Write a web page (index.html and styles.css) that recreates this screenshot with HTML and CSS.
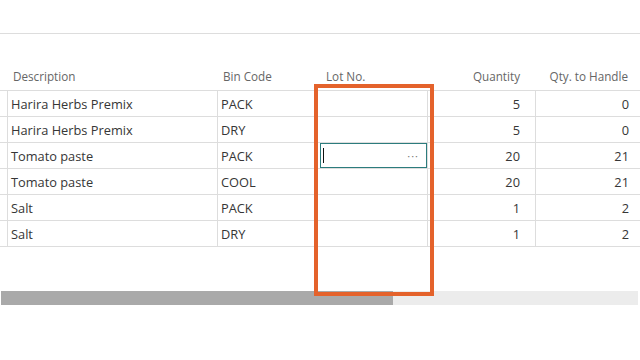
FILE: index.html
```html
<!DOCTYPE html>
<html lang="en">
<head>
    <meta charset="UTF-8">
    <meta name="viewport" content="width=device-width, initial-scale=1.0">
    <title>Lines</title>
    <link rel="stylesheet" href="styles.css">
</head>
<body>
    <div class="page">
        <div class="toolbar"></div>

        <div class="grid">
            <div class="row head">
                <div class="cell sel"></div>
                <div class="cell">Description</div>
                <div class="cell">Bin Code</div>
                <div class="cell lot">Lot No.</div>
                <div class="cell num qty">Quantity</div>
                <div class="cell num handle">Qty. to Handle</div>
            </div>

            <div class="row">
                <div class="cell sel"></div>
                <div class="cell">Harira Herbs Premix</div>
                <div class="cell">PACK</div>
                <div class="cell lot"></div>
                <div class="cell num qty">5</div>
                <div class="cell num handle">0</div>
            </div>
            <div class="row">
                <div class="cell sel"></div>
                <div class="cell">Harira Herbs Premix</div>
                <div class="cell">DRY</div>
                <div class="cell lot"></div>
                <div class="cell num qty">5</div>
                <div class="cell num handle">0</div>
            </div>
            <div class="row">
                <div class="cell sel"></div>
                <div class="cell">Tomato paste</div>
                <div class="cell">PACK</div>
                <div class="cell lot">
                    <div class="edit">
                        <span class="caret"></span>
                        <span class="more">···</span>
                    </div>
                </div>
                <div class="cell num qty">20</div>
                <div class="cell num handle">21</div>
            </div>
            <div class="row">
                <div class="cell sel"></div>
                <div class="cell">Tomato paste</div>
                <div class="cell">COOL</div>
                <div class="cell lot"></div>
                <div class="cell num qty">20</div>
                <div class="cell num handle">21</div>
            </div>
            <div class="row">
                <div class="cell sel"></div>
                <div class="cell">Salt</div>
                <div class="cell">PACK</div>
                <div class="cell lot"></div>
                <div class="cell num qty">1</div>
                <div class="cell num handle">2</div>
            </div>
            <div class="row">
                <div class="cell sel"></div>
                <div class="cell">Salt</div>
                <div class="cell">DRY</div>
                <div class="cell lot"></div>
                <div class="cell num qty">1</div>
                <div class="cell num handle">2</div>
            </div>
        </div>

        <div class="scrollbar">
            <div class="thumb"></div>
        </div>

        <!-- highlight around the Lot No. column -->
        <div class="highlight"></div>
    </div>
</body>
</html>
```

FILE: styles.css
```css
body {
    margin: 0;
    background: white;
    font-family: "Segoe UI", "Open Sans", sans-serif;
    color: #363636;
}

.page {
    position: relative;
    width: 640px;
    height: 360px;
    overflow: hidden;
}

.toolbar {
    height: 34px;
    border-bottom: 1px solid #dddddd;
    box-sizing: border-box;
}

.row {
    display: grid;
    grid-template-columns: 8px 210px 97px 113px 108px 1fr;
    height: 26px;
    border-bottom: 1px solid #dddddd;
    box-sizing: border-box;
    font-size: 12.8px;
}

.cell {
    display: flex;
    align-items: center;
    padding: 0 3px;
    border-right: 1px solid #dddddd;
    white-space: nowrap;
    overflow: hidden;
}

.cell.sel {
    padding: 0;
}

.cell.num {
    justify-content: flex-end;
}

.cell.qty {
    padding-right: 15px;
}

.cell.handle {
    border-right: none;
    padding-right: 11px;
}

.row.head {
    height: 57px;
    font-size: 11.7px;
    color: #666666;
}

.row.head .cell {
    align-items: flex-end;
    padding-bottom: 6px;
    padding-left: 5px;
    border-right-color: transparent;
}

.row.head .cell.lot {
    padding-left: 11px;
}

.row.head .cell.qty {
    padding-right: 15px;
}

.row.head .cell.handle {
    padding-right: 12px;
}

.cell.lot {
    padding: 0 0 0 5px;
}

.edit {
    flex: 1;
    height: 100%;
    border: 1px solid #2c7c7d;
    box-sizing: border-box;
    display: flex;
    align-items: center;
    justify-content: space-between;
    padding: 0 7px 0 2px;
}

.caret {
    width: 1px;
    height: 15px;
    background: #111111;
}

.more {
    color: #777777;
    font-size: 11px;
    letter-spacing: 1px;
}

.scrollbar {
    margin: 44px 2px 0 1px;
    height: 14px;
    background: #ececec;
}

.thumb {
    width: 392px;
    height: 100%;
    background: #a9a9a9;
}

.highlight {
    position: absolute;
    left: 314px;
    top: 84px;
    width: 120px;
    height: 212px;
    border: 4px solid #e4622b;
    box-sizing: border-box;
}
```
